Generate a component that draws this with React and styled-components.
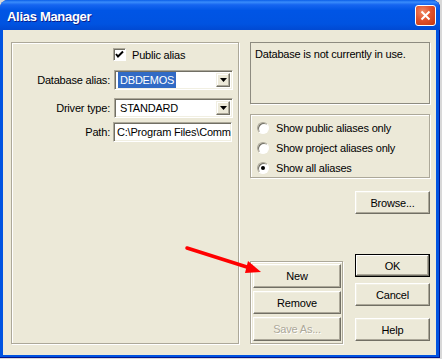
import styled, { createGlobalStyle } from "styled-components";

const Global = createGlobalStyle`
  html, body { margin: 0; padding: 0; background: #d8d8d8; }
  body {
    font-family: "Liberation Sans", Arial, sans-serif;
    font-size: 11px;
    letter-spacing: -0.2px;
    color: #000;
  }
`;

const Window = styled.div`
  position: relative;
  width: 440px;
  height: 358px;
  background: #0053e1;
  border-radius: 8px 8px 0 0;
  display: flex;
  flex-direction: column;
  box-shadow: inset 0 -1px #00138c, inset -1px 0 #00138c;
`;

const TitleBar = styled.div`
  height: 30px;
  flex: none;
  display: flex;
  align-items: center;
  padding: 0 4px 0 7px;
  border-radius: 8px 8px 0 0;
  background: linear-gradient(
    to bottom,
    #0a5ee8 0%,
    #3a8cfb 7%,
    #1665f0 16%,
    #0055e5 35%,
    #0053e1 80%,
    #0149d2 100%
  );
`;

const Title = styled.div`
  flex: 1;
  color: #fff;
  font-weight: bold;
  font-size: 13px;
  letter-spacing: -0.3px;
  padding-top: 2px;
  text-shadow: 1px 1px #0a1e8c;
`;

const CloseBtn = styled.div`
  width: 19px;
  height: 19px;
  border: 1px solid #fff;
  border-radius: 3px;
  background: radial-gradient(circle at 35% 30%, #f08a66 0%, #e2532e 45%, #c4370f 100%);
  display: flex;
  align-items: center;
  justify-content: center;
  margin-top: 1px;
`;

const Client = styled.div`
  flex: 1;
  margin: 0 4px 3px 3px;
  background: #ece9d8;
  display: flex;
  gap: 11px;
  padding: 12px 6px 11px 8px;
`;

const Etched = styled.div`
  border: 1px solid #aca899;
  box-shadow: inset 1px 1px #fff, 1px 1px #fff;
`;

const LeftPanel = styled(Etched)`
  width: 226px;
  flex: none;
  display: flex;
  flex-direction: column;
  padding-top: 5px;
`;

const CheckRow = styled.label`
  display: flex;
  align-items: center;
  gap: 6px;
  margin-left: 101px;
  height: 13px;
`;

const CheckBox = styled.span`
  width: 11px;
  height: 11px;
  background: #fff;
  border: 1px solid;
  border-color: #aca899 #fff #fff #aca899;
  box-shadow: inset 1px 1px #716f64;
  display: flex;
  align-items: center;
  justify-content: center;
`;

const FieldRow = styled.div`
  display: flex;
  align-items: center;
  margin-top: ${(p) => p.top}px;
`;

const FieldLabel = styled.span`
  width: 98px;
  text-align: right;
  flex: none;
`;

const Sunken = styled.div`
  background: #fff;
  border: 1px solid;
  border-color: #aca899 #fff #fff #aca899;
  box-shadow: inset 1px 1px #716f64, inset -1px -1px #f1efe2;
  display: flex;
  align-items: center;
  overflow: hidden;
  white-space: nowrap;
  box-sizing: border-box;
  width: 119px;
  height: 20px;
`;

const Combo = styled(Sunken)`
  margin-left: ${(p) => p.left}px;
  padding: 2px 2px 2px 3px;
`;

const ComboText = styled.span`
  padding: 2px 2px;
  ${(p) => (p.selected ? `background:#316ac5;color:#fff;` : ``)}
`;

const DropBtn = styled.span`
  width: 14px;
  height: 14px;
  flex: none;
  margin-left: auto;
  background: #ece9d8;
  box-sizing: border-box;
  border: 1px solid;
  border-color: #f1efe2 #716f64 #716f64 #f1efe2;
  box-shadow: inset -1px -1px #aca899, inset 1px 1px #fff;
  display: flex;
  align-items: center;
  justify-content: center;
`;

const PathEdit = styled(Sunken)`
  margin-left: 3px;
  padding: 0 3px;
`;

const RightCol = styled.div`
  width: 180px;
  flex: none;
  display: flex;
  flex-direction: column;
`;

const StatusBox = styled.div`
  height: 62px;
  box-sizing: border-box;
  border: 1px solid #8d8b80;
  box-shadow: 1px 1px #fff;
  padding: 5px 4px;
`;

const RadioBox = styled(Etched)`
  margin-top: 10px;
  height: 64px;
  box-sizing: border-box;
  padding: 6px 0 0 6px;
  display: flex;
  flex-direction: column;
  gap: 7px;
`;

const RadioRow = styled.label`
  display: flex;
  align-items: center;
  gap: 7px;
  height: 13px;
`;

const Radio = styled.span`
  width: 12px;
  height: 12px;
  border-radius: 50%;
  background: #fff;
  box-sizing: border-box;
  border: 1px solid;
  border-color: #aca899 #fff #fff #aca899;
  box-shadow: inset 1px 1px #716f64;
  display: flex;
  align-items: center;
  justify-content: center;
  &::after {
    content: "";
    width: 4px;
    height: 4px;
    border-radius: 50%;
    background: ${(p) => (p.checked ? "#000" : "transparent")};
  }
`;

const Button = styled.div`
  box-sizing: border-box;
  flex: none;
  width: ${(p) => p.w || 75}px;
  height: ${(p) => p.h || 23}px;
  background: #ece9d8;
  border: 1px solid;
  border-color: #fff #716f64 #716f64 #fff;
  box-shadow: inset -1px -1px #aca899, inset 1px 1px #f1efe2;
  display: flex;
  align-items: center;
  justify-content: center;
  color: ${(p) => (p.disabled ? "#aca899" : "#000")};
  text-shadow: ${(p) => (p.disabled ? "1px 1px #fff" : "none")};
  ${(p) =>
    p.default
      ? `border-color:#000; box-shadow: inset -1px -1px #716f64, inset 1px 1px #fff, inset -2px -2px #aca899;`
      : ``}
`;

const BrowseWrap = styled.div`
  margin-top: 13px;
  display: flex;
  justify-content: flex-end;
`;

const BottomRow = styled.div`
  margin-top: auto;
  display: flex;
  justify-content: space-between;
  align-items: flex-end;
`;

const SmallGroup = styled(Etched)`
  width: 93px;
  height: 83px;
  box-sizing: border-box;
  padding: 2px 2px 1px 2px;
  display: flex;
  flex-direction: column;
  gap: 3px;
`;

const SideButtons = styled.div`
  display: flex;
  flex-direction: column;
  margin-bottom: 3px;
  gap: 6px;
`;

const Arrow = styled.svg`
  position: absolute;
  left: 0;
  top: 0;
  pointer-events: none;
`;

const Tri = () => (
  <svg width="7" height="4" viewBox="0 0 7 4">
    <path d="M0 0h7L3.5 4z" fill="#000" />
  </svg>
);

export default function App() {
  return (
    <>
      <Global />
      <Window>
        <TitleBar>
          <Title>Alias Manager</Title>
          <CloseBtn>
            <svg width="11" height="11" viewBox="0 0 11 11">
              <path d="M1.5 1.5l8 8M9.5 1.5l-8 8" stroke="#fff" strokeWidth="2" />
            </svg>
          </CloseBtn>
        </TitleBar>
        <Client>
          <LeftPanel>
            <CheckRow>
              <CheckBox>
                <svg width="9" height="9" viewBox="0 0 9 9">
                  <path d="M1 4l2 2.5L8 1.5" stroke="#000" strokeWidth="2" fill="none" />
                </svg>
              </CheckBox>
              Public alias
            </CheckRow>
            <FieldRow top={9}>
              <FieldLabel>Database alias:</FieldLabel>
              <Combo left={4}>
                <ComboText selected>DBDEMOS</ComboText>
                <DropBtn>
                  <Tri />
                </DropBtn>
              </Combo>
            </FieldRow>
            <FieldRow top={8}>
              <FieldLabel>Driver type:</FieldLabel>
              <Combo left={4}>
                <ComboText>STANDARD</ComboText>
                <DropBtn>
                  <Tri />
                </DropBtn>
              </Combo>
            </FieldRow>
            <FieldRow top={4}>
              <FieldLabel>Path:</FieldLabel>
              <PathEdit>C:\Program Files\Comm</PathEdit>
            </FieldRow>
          </LeftPanel>
          <RightCol>
            <StatusBox>Database is not currently in use.</StatusBox>
            <RadioBox>
              <RadioRow>
                <Radio />
                Show public aliases only
              </RadioRow>
              <RadioRow>
                <Radio />
                Show project aliases only
              </RadioRow>
              <RadioRow>
                <Radio checked />
                Show all aliases
              </RadioRow>
            </RadioBox>
            <BrowseWrap>
              <Button>Browse...</Button>
            </BrowseWrap>
            <BottomRow>
              <SmallGroup>
                <Button w={88} h={24}>New</Button>
                <Button w={88} h={23}>Remove</Button>
                <Button w={88} h={24} disabled>
                  Save As...
                </Button>
              </SmallGroup>
              <SideButtons>
                <Button default>OK</Button>
                <Button>Cancel</Button>
                <Button style={{ marginTop: 6 }}>Help</Button>
              </SideButtons>
            </BottomRow>
          </RightCol>
        </Client>
        <Arrow width="440" height="358">
          <path d="M187 248L250 268" stroke="#f00" strokeWidth="3.5" strokeLinecap="round" />
          <polygon points="261,272 245,273 248,261" fill="#f00" />
        </Arrow>
      </Window>
    </>
  );
}
